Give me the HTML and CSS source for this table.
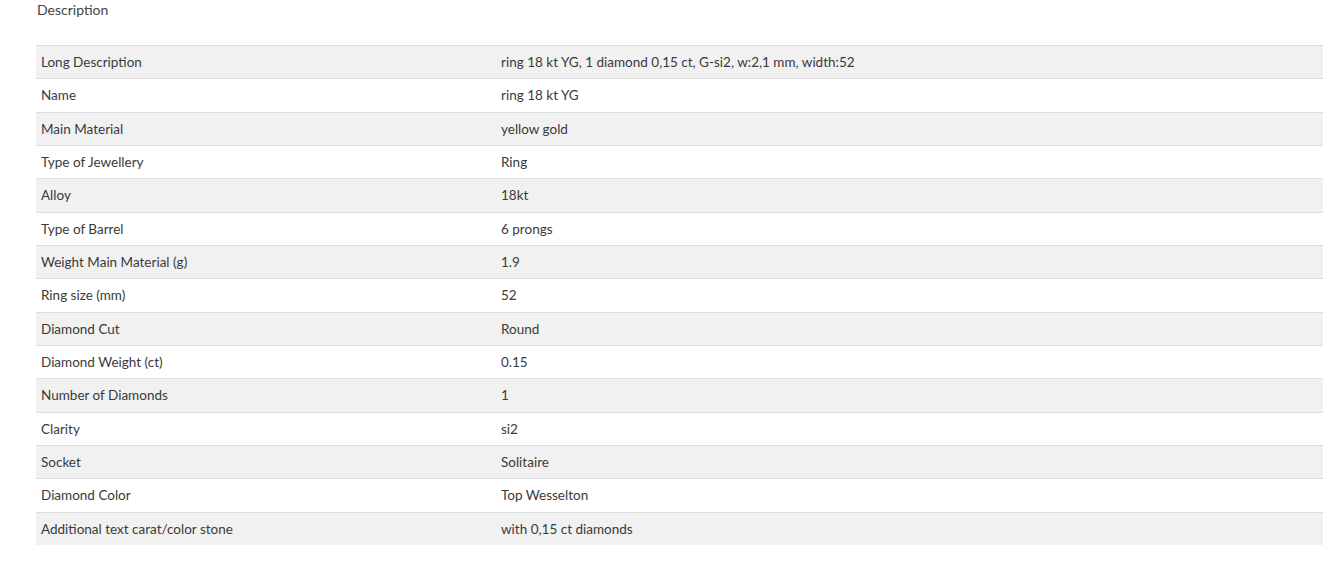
FILE: index.html
```html
<!DOCTYPE html>
<html>
<head>
<meta charset="utf-8">
<link rel="stylesheet" href="styles.css">
</head>
<body>
<div class="wrap">
  <h3 class="title">Description</h3>
  <div class="specs">
    <div class="row"><div class="k">Long Description</div><div class="v">ring 18 kt YG, 1 diamond 0,15 ct, G-si2, w:2,1 mm, width:52</div></div>
    <div class="row"><div class="k">Name</div><div class="v">ring 18 kt YG</div></div>
    <div class="row"><div class="k">Main Material</div><div class="v">yellow gold</div></div>
    <div class="row"><div class="k">Type of Jewellery</div><div class="v">Ring</div></div>
    <div class="row"><div class="k">Alloy</div><div class="v">18kt</div></div>
    <div class="row"><div class="k">Type of Barrel</div><div class="v">6 prongs</div></div>
    <div class="row"><div class="k">Weight Main Material (g)</div><div class="v">1.9</div></div>
    <div class="row"><div class="k">Ring size (mm)</div><div class="v">52</div></div>
    <div class="row"><div class="k">Diamond Cut</div><div class="v">Round</div></div>
    <div class="row"><div class="k">Diamond Weight (ct)</div><div class="v">0.15</div></div>
    <div class="row"><div class="k">Number of Diamonds</div><div class="v">1</div></div>
    <div class="row"><div class="k">Clarity</div><div class="v">si2</div></div>
    <div class="row"><div class="k">Socket</div><div class="v">Solitaire</div></div>
    <div class="row"><div class="k">Diamond Color</div><div class="v">Top Wesselton</div></div>
    <div class="row"><div class="k">Additional text carat/color stone</div><div class="v">with 0,15 ct diamonds</div></div>
  </div>
</div>
</body>
</html>
```
FILE: styles.css
```css
html, body {
  margin: 0;
  padding: 0;
  background: #fff;
}
body {
  font-family: Lato, "Open Sans", "Liberation Sans", sans-serif;
  font-size: 13.5px;
  color: #3a3a3a;
}
.wrap {
  width: 1287px;
  margin-left: 36px;
}
.title {
  margin: 0;
  padding: 0 0 0 1px;
  height: 45px;
  box-sizing: border-box;
  font-size: 14px;
  font-weight: normal;
  line-height: 20px;
  color: #444;
}
.specs {
  display: grid;
  grid-template-columns: 460px 1fr;
  grid-auto-rows: 33.333px;
}
.row {
  display: contents;
}
.k, .v {
  display: flex;
  align-items: center;
  box-sizing: border-box;
  border-top: 1px solid #dedede;
  padding: 0 5px;
  line-height: 20px;
}
.row:nth-child(odd) .k, .row:nth-child(odd) .v {
  background: #f1f1f1;
}
```
